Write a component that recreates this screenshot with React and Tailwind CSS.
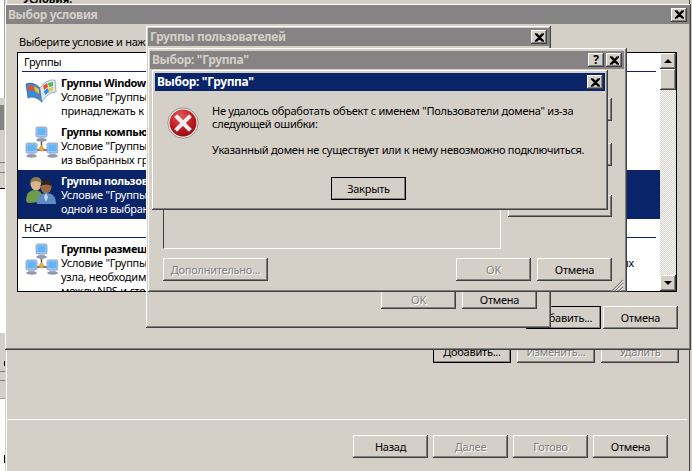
const raised = "shadow-[inset_-1px_-1px_#404040,inset_1px_1px_#fff,inset_-2px_-2px_#808080]";
const font = "font-['Noto_Sans','Liberation_Sans',sans-serif]";

function Btn({ children, disabled, def, className = "" }) {
  return (
    <div className={`flex items-center justify-center bg-[#d4d0c8] text-[11px] leading-none tracking-[-0.25px] ${raised} ${disabled ? "text-[#808080] [text-shadow:1px_1px_0_#fff]" : "text-black"} ${def ? "outline outline-1 -outline-offset-1 outline-black" : ""} ${className}`}>
      {children}
    </div>
  );
}

function TitleBtn({ children, className = "" }) {
  return (
    <div className={`w-4 h-[14px] flex items-center justify-center bg-[#d4d0c8] ${raised} ${className}`}>{children}</div>
  );
}

const XGlyph = () => (
  <svg width="10" height="9" viewBox="0 0 10 9"><path d="M1 0.5 L8.5 8.5 M2.5 0.5 L10 8.5 M8.5 0.5 L1 8.5 M10 0.5 L2.5 8.5" stroke="#000" strokeWidth="1.2" fill="none" /></svg>
);

function Win({ className = "", children }) {
  return (
    <div className={`absolute bg-[#d4d0c8] shadow-[inset_-1px_-1px_#404040,inset_1px_1px_#fff,inset_-2px_-2px_#808080] ${className}`}>{children}</div>
  );
}

function Title({ text, active, buttons, className = "" }) {
  return (
    <div className={`flex items-center justify-between pl-[2px] pr-[2px] font-bold text-[12px] tracking-[-0.35px] ${active ? "bg-[#0a246a] text-white" : "bg-[#858383] text-[#d4d0c8]"} ${className}`}>
      <span>{text}</span>
      <div className="flex gap-[2px]">{buttons}</div>
    </div>
  );
}

const BookIcon = () => (
  <svg width="32" height="26" viewBox="0 0 32 26">
    <path d="M1 7 Q8 4 15 11 L17 25 Q9 18 3 21 Z" fill="#4d86c4" stroke="#1d4f8c" strokeWidth="0.6" />
    <path d="M15 11 Q21 2 30 3 L31 15 Q23 15 17 25 Z" fill="#dbe8f6" stroke="#5f86b5" strokeWidth="0.6" />
    <path d="M3 9 L8 8 L9 13 L4 14 Z" fill="#e8502b" />
    <path d="M9 9 L14 12 L14 17 L10 14 Z" fill="#e9c22a" />
    <path d="M4 15 L9 14 L10 19 L5 20 Z" fill="#2f8ee0" />
    <path d="M18 9 L22 6 L23 10 L19 13 Z" fill="#e8502b" />
    <path d="M23 6 L28 5 L28 9 L24 10 Z" fill="#60b53b" />
    <path d="M19 14 L23 11 L24 15 L20 18 Z" fill="#2f8ee0" />
    <path d="M24 11 L28 10 L28 14 L24 15 Z" fill="#eecb32" />
  </svg>
);

const Monitor = ({ x, y }) => (
  <g transform={`translate(${x} ${y})`}>
    <rect x="0" y="0" width="11" height="10" rx="1.5" fill="#9cc9f0" stroke="#8a9ab8" strokeWidth="0.8" />
    <rect x="1.5" y="1.5" width="8" height="6.5" fill="#62b4f4" />
    <path d="M3 10 L8 10 L9 12 L2 12 Z" fill="#b7c2d6" />
    <ellipse cx="5.5" cy="13" rx="5.2" ry="1.7" fill="#8f98ad" />
  </g>
);

const NetIcon = () => (
  <svg width="33" height="33" viewBox="0 0 33 33">
    <path d="M16.5 12 V22 M7 24 H26" stroke="#555" strokeWidth="1.5" fill="none" />
    <Monitor x="11" y="1" />
    <Monitor x="1" y="17" />
    <Monitor x="22" y="17" />
    <path d="M16.5 19 L19.5 22.5 L16.5 26 L13.5 22.5 Z" fill="#eaa93a" />
  </svg>
);

const UsersIcon = () => (
  <svg width="31" height="30" viewBox="0 0 31 30">
    <ellipse cx="10" cy="9" rx="5.5" ry="6.5" fill="#d8b48c" />
    <path d="M4 8 Q5 1 11 2 Q16 3 15.5 8 Q10 4 4 8Z" fill="#8c7a4a" />
    <path d="M0 26 Q0 15 9 15 Q16 15 17 24 L15 27 L2 28Z" fill="#6f9a4c" />
    <ellipse cx="20" cy="12" rx="5.5" ry="6.5" fill="#9a6a48" />
    <path d="M14.5 11 Q15 4 21 5 Q26 6 25.5 11 Q20 8 14.5 11Z" fill="#33261c" />
    <path d="M11 29 Q11 18 20 18 Q30 18 30 29Z" fill="#5d8cc4" />
    <path d="M20 18 L18 22 L20 27 L22 22Z" fill="#c9d9ee" />
  </svg>
);

const ErrorIcon = () => (
  <svg width="32" height="32" viewBox="0 0 32 32">
    <defs>
      <radialGradient id="er" cx="40%" cy="25%" r="85%">
        <stop offset="0" stopColor="#e65a5a" />
        <stop offset="0.55" stopColor="#c01a1f" />
        <stop offset="1" stopColor="#8a0d12" />
      </radialGradient>
    </defs>
    <circle cx="16" cy="16" r="15.2" fill="#efe9e6" stroke="#8a8080" strokeWidth="0.8" />
    <circle cx="16" cy="16" r="13.4" fill="url(#er)" />
    <path d="M10 10 L22 22 M22 10 L10 22" stroke="#f4eeee" strokeWidth="4" strokeLinecap="square" />
  </svg>
);

function Item({ icon, title, lines, selected, last }) {
  return (
    <div className={`${last ? "flex-1 min-h-0" : "h-[49px] shrink-0"} flex overflow-hidden ${selected ? "bg-[#0a246a] text-white" : "text-black"}`}>
      <div className="w-[43px] shrink-0 flex justify-center items-start pl-[3px] pt-[5px]">{icon}</div>
      <div className="text-[11px] leading-[14px] tracking-[-0.25px] pt-[4px] whitespace-nowrap">
        <div className="font-bold tracking-[-0.35px]">{title}</div>
        {lines.map((l, i) => <div key={i}>{l}</div>)}
      </div>
    </div>
  );
}

function Head({ children }) {
  return (
    <div className="h-[18px] mx-[4px] mt-[1px] shrink-0 border-b border-[#0a246a] text-[11px] leading-[16px] pl-[2px] text-black tracking-[-0.25px]">{children}</div>
  );
}

function Arrow({ up }) {
  return (
    <div className={`h-4 shrink-0 flex items-center justify-center bg-[#d4d0c8] ${raised}`}>
      <div className={`w-0 h-0 border-x-[4px] border-x-transparent ${up ? "border-b-[4px] border-b-black" : "border-t-[4px] border-t-black"}`} />
    </div>
  );
}

export default function App() {
  return (
    <div className={`relative w-[692px] h-[471px] overflow-hidden bg-[#d4d0c8] text-black ${font}`}>
      {/* Desktop slivers left of the windows */}
      <div className="absolute left-0 top-0 w-[5px] h-[98px] bg-white border-r border-[#a0a0a0]" />
      <div className="absolute left-0 top-[105px] w-[4px] h-[25px] bg-[#858383]" />
      <div className="absolute left-0 top-[162px] w-[5px] h-[11px] border-y border-[#808080]" />
      <div className="absolute left-0 top-[188px] w-[5px] h-[145px] bg-white border-t border-black" />
      <div className="absolute left-[4px] top-[361px] w-[1px] h-[5px] bg-black" />
      <div className="absolute left-0 top-[371px] w-[5px] h-[10px] border-y border-[#808080]" />
      <div className="absolute left-0 top-[398px] w-[5px] h-[73px] bg-white border-t border-[#a0a0a0]" />
      <div className="absolute left-[4px] top-[455px] w-[1px] h-[8px] bg-black" />

      {/* Wizard behind */}
      <div className="absolute left-[6px] top-0 w-[684px] h-[471px] flex flex-col bg-[#d4d0c8] border-l border-white border-r border-r-[#404040]">
        <div className="absolute left-[16px] top-[-8px] font-bold text-[11px] leading-[14px]">Условия:</div>
        <div className="h-[340px] shrink-0" />
        <div className="flex justify-end gap-[6px] pr-[10px]">
          <Btn def className="w-[78px] h-[23px]">Добавить...</Btn>
          <Btn disabled className="w-[78px] h-[23px]">Изменить...</Btn>
          <Btn disabled className="w-[78px] h-[23px]">Удалить</Btn>
        </div>
        <div className="mt-[56px] mr-[2px] border-t border-white h-0" />
        <div className="mt-[15px] flex justify-end gap-[5px] pr-[21px]">
          <Btn className="w-[75px] h-[23px]">Назад</Btn>
          <Btn disabled className="w-[75px] h-[23px]">Далее</Btn>
          <Btn disabled className="w-[75px] h-[23px]">Готово</Btn>
          <Btn className="w-[75px] h-[23px]">Отмена</Btn>
        </div>
      </div>

      {/* Выбор условия */}
      <Win className="left-[5px] top-[4px] w-[686px] h-[346px] p-[1px] pr-[2px] flex flex-col">
        <Title text="Выбор условия" className="h-[19px] shrink-0" buttons={<TitleBtn><XGlyph /></TitleBtn>} />
        <div className="pl-[13px] pt-[11px] text-[11px] leading-[14px] tracking-[-0.25px] whitespace-nowrap">Выберите условие и нажмите кнопку "Добавить".</div>
        <div className="ml-[11px] mt-[3px] w-[660px] h-[240px] flex border border-black bg-white">
          <div className="flex-1 min-w-0 flex flex-col overflow-hidden">
            <Head>Группы</Head>
            <Item icon={<BookIcon />} title="Группы Windows" lines={['Условие "Группы Windows"', "принадлежать к одной из групп"]} />
            <Item icon={<NetIcon />} title="Группы компьютеров" lines={['Условие "Группы компьютеров"', "из выбранных групп"]} />
            <Item selected icon={<UsersIcon />} title="Группы пользователей" lines={['Условие "Группы пользователей"', "одной из выбранных групп"]} />
            <Head>HCAP</Head>
            <Item last icon={<NetIcon />} title="Группы размещения" lines={[
              <span key="a" className="flex w-[573px] justify-between"><span>Условие "Группы размещения"</span><span>ых</span></span>,
              "узла, необходимые",
              "между NPS и сторонами",
            ]} />
          </div>
          <div className="w-[16px] shrink-0 flex flex-col bg-[repeating-conic-gradient(#fff_0_25%,#d4d0c8_0_50%)] bg-[length:2px_2px]">
            <Arrow up />
            <div className={`h-[21px] shrink-0 bg-[#d4d0c8] ${raised}`} />
            <div className="flex-1" />
            <Arrow />
          </div>
        </div>
        <div className="mt-[14px] flex justify-end gap-[2px] pr-[11px]">
          <Btn def className="w-[75px] h-[23px]">Добавить...</Btn>
          <Btn className="w-[75px] h-[23px]">Отмена</Btn>
        </div>
      </Win>

      {/* Группы пользователей */}
      <Win className="left-[146px] top-[26px] w-[405px] h-[302px] p-[2px] flex flex-col">
        <Title text="Группы пользователей" className="h-[18px] shrink-0" buttons={<TitleBtn><XGlyph /></TitleBtn>} />
        <div className="mt-auto mb-[17px] flex justify-end gap-[6px] pr-[12px]">
          <Btn disabled className="w-[75px] h-[19px]">OK</Btn>
          <Btn className="w-[75px] h-[19px]">Отмена</Btn>
        </div>
      </Win>

      {/* Выбор: "Группа" — dialog */}
      <Win className="left-[148px] top-[48px] w-[479px] h-[244px] pt-[3px] pl-[2px] pr-[3px] flex flex-col">
        <Title text='Выбор: "Группа"' className="h-[18px] shrink-0" buttons={<><TitleBtn><span className="text-[12px] font-bold leading-none text-black">?</span></TitleBtn><TitleBtn><XGlyph /></TitleBtn></>} />
        <div className="relative flex-1">
          <div className="absolute left-[13px] top-[141px] w-[338px] h-[39px] border-l border-[#404040] border-b border-b-white border-r border-r-white" />
          <Btn className="absolute right-[12px] top-[29px] w-[104px] h-[23px]" />
          <Btn className="absolute right-[12px] top-[74px] w-[104px] h-[23px]" />
          <Btn className="absolute right-[12px] top-[126px] w-[104px] h-[22px]" />
          <div className="absolute left-[13px] right-[12px] bottom-[11px] flex items-center justify-between">
            <Btn disabled className="w-[105px] h-[23px]">Дополнительно...</Btn>
            <div className="flex gap-[6px]">
              <Btn disabled className="w-[75px] h-[23px]">OK</Btn>
              <Btn className="w-[75px] h-[23px]">Отмена</Btn>
            </div>
          </div>
          <svg className="absolute right-0 bottom-0" width="13" height="13" viewBox="0 0 13 13">
            <path d="M12 1 L1 12 M12 4 L4 12 M12 8 L8 12" stroke="#808080" strokeWidth="1.2" />
            <path d="M12 2.2 L2.2 12 M12 5.2 L5.2 12 M12 9.2 L9.2 12" stroke="#fff" strokeWidth="0.8" />
          </svg>
        </div>
      </Win>

      {/* Выбор: "Группа" — error */}
      <Win className="left-[152px] top-[70px] w-[456px] h-[140px] pt-[3px] pl-[3px] pr-[3px] flex flex-col">
        <Title text='Выбор: "Группа"' active className="h-[18px] shrink-0" buttons={<TitleBtn><XGlyph /></TitleBtn>} />
        <div className="flex pt-[13px] pl-[12px]">
          <div className="w-[45px] shrink-0 pt-[3px]"><ErrorIcon /></div>
          <div className="text-[11px] leading-[13px] tracking-[-0.25px]">
            <div>Не удалось обработать объект с именем "Пользователи домена" из-за</div>
            <div>следующей ошибки:</div>
            <div className="mt-[13px]">Указанный домен не существует или к нему невозможно подключиться.</div>
          </div>
        </div>
        <div className="flex mt-[21px] ml-[176px]">
          <Btn def className="w-[75px] h-[23px]">Закрыть</Btn>
        </div>
      </Win>
    </div>
  );
}
